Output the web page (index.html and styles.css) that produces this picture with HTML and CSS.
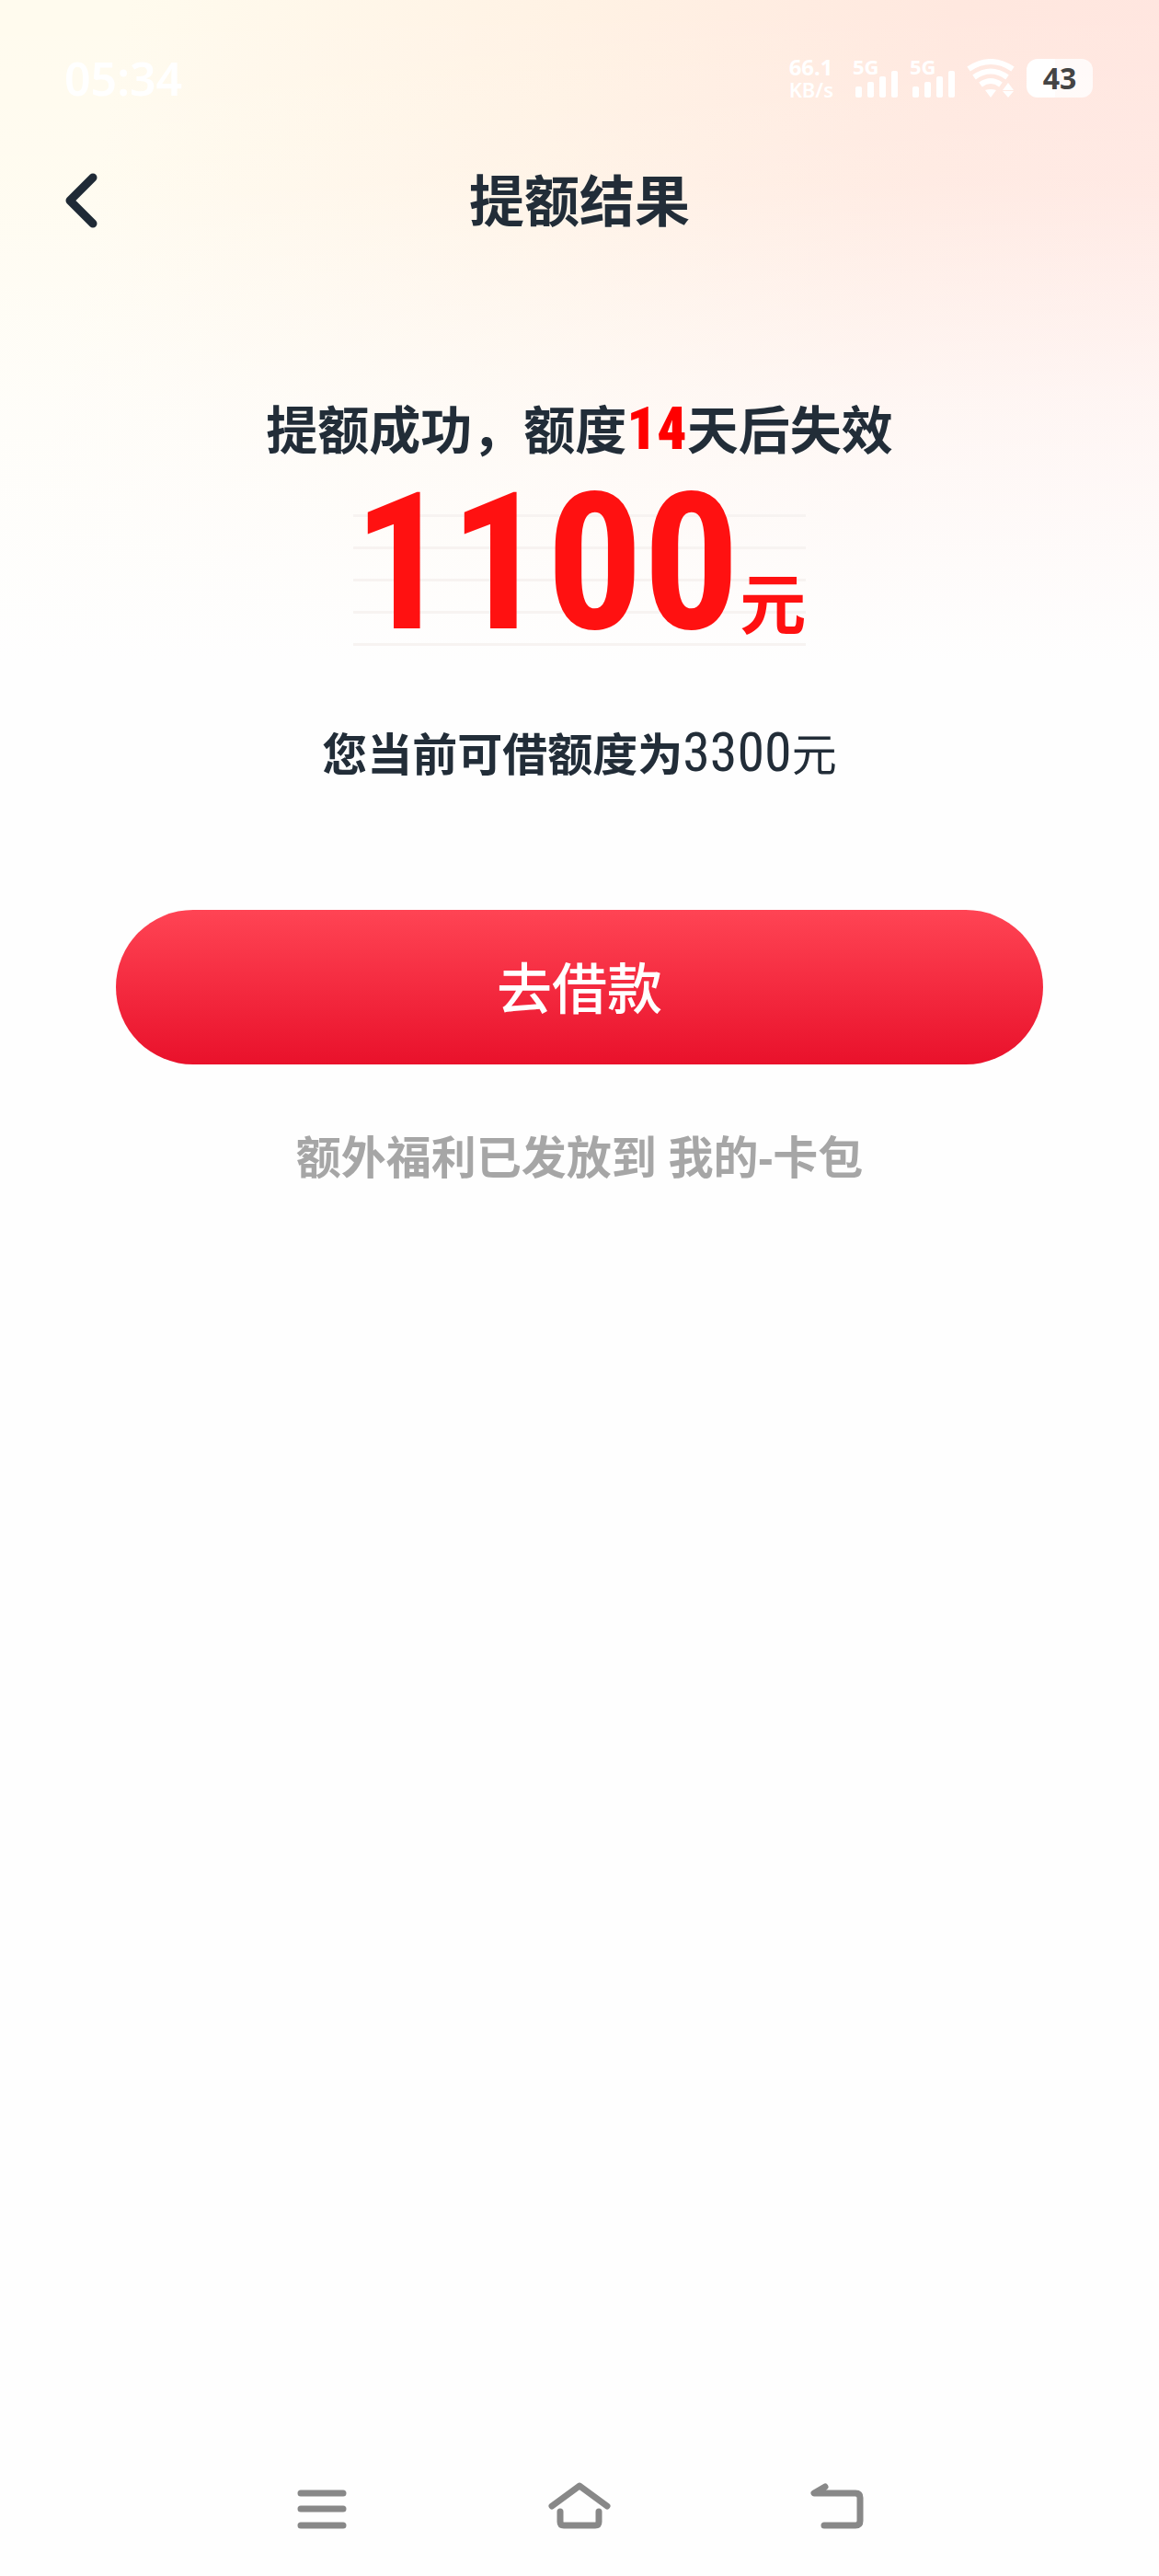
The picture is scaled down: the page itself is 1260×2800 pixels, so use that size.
FILE: index.html
```
<!DOCTYPE html>
<html lang="zh-CN">
<head>
  <meta charset="UTF-8">
  <meta name="viewport" content="width=device-width, initial-scale=1.0">
  <title>提额结果</title>
  <link rel="stylesheet" href="styles.css">
</head>
<body>
  <div class="page">
    <!-- 状态栏 -->
    <div class="status">
      <span class="time">05:34</span>
      <div class="status_right">
        <div class="net"><span>66.1</span><span class="unit">KB/s</span></div>
        <div class="signal">
          <span>5G</span>
          <svg width="49" height="30" viewBox="0 0 49 30" fill="#fff">
            <rect x="3" y="18" width="7" height="12" rx="2"/>
            <rect x="16" y="13" width="7" height="17" rx="2"/>
            <rect x="29" y="7" width="7" height="23" rx="2"/>
            <rect x="42" y="1" width="7" height="29" rx="2"/>
          </svg>
        </div>
        <div class="signal">
          <span>5G</span>
          <svg width="49" height="30" viewBox="0 0 49 30" fill="#fff">
            <rect x="3" y="18" width="7" height="12" rx="2"/>
            <rect x="16" y="13" width="7" height="17" rx="2"/>
            <rect x="29" y="7" width="7" height="23" rx="2"/>
            <rect x="42" y="1" width="7" height="29" rx="2"/>
          </svg>
        </div>
        <svg class="wifi" width="52" height="42" viewBox="0 0 52 42">
          <g fill="none" stroke="#fff" stroke-width="6">
            <path d="M2 11Q26-5 50 11"/>
            <path d="M8 20Q26 7 44 20"/>
            <path d="M15 28Q26 20 37 28"/>
          </g>
          <path d="M20 34q6-2 12 0l-6 8zM39 34l6-8 6 8zM39 35h12l-6 7z" fill="#fff"/>
        </svg>
        <div class="battery">43</div>
      </div>
    </div>

    <!-- 标题栏 -->
    <header class="header">
      <button class="back" aria-label="返回">
        <svg width="36" height="60" viewBox="0 0 36 60">
          <path d="M31 5L6 30l25 25" fill="none" stroke="#1f2a36" stroke-width="9" stroke-linecap="round" stroke-linejoin="round"/>
        </svg>
      </button>
      <h1>提额结果</h1>
    </header>

    <!-- 提额结果内容 -->
    <main class="result">
      <p class="tip">提额成功，额度<b>14</b>天后失效</p>
      <div class="amount"><span class="num">1100</span><span class="yuan">元</span></div>
      <p class="total"><b>您当前可借额度为</b><span>3300</span>元</p>
      <button class="borrow">去借款</button>
      <p class="gift">额外福利已发放到 我的-卡包</p>
    </main>

    <!-- 系统导航 -->
    <nav class="nav">
      <button aria-label="菜单">
        <svg width="70" height="56" viewBox="0 0 70 56">
          <path d="M12 14h46M12 31h46M12 49h46"/>
        </svg>
      </button>
      <button aria-label="主页">
        <svg width="70" height="56" viewBox="0 0 70 56">
          <path d="M5 28L35 6l30 22M14 34v11q0 4 4 4h34q4 0 4-4V34"/>
        </svg>
      </button>
      <button aria-label="后退">
        <svg width="70" height="56" viewBox="0 0 70 56">
          <path d="M22 7L10 14h45q5 0 5 5v25q0 5-5 5H21"/>
        </svg>
      </button>
    </nav>
  </div>
</body>
</html>
```
FILE: styles.css
```
*{
  margin: 0;
  padding: 0;
  box-sizing: border-box;
}
body{
  background-color: #fefefe;
  color: #222d38;
  font-family: "Noto Sans", "Noto Sans CJK SC", sans-serif;
}
button{
  border: 0;
  background: none;
  font-family: inherit;
  cursor: pointer;
}
svg{
  display: block;
}
/* 顶部暖色渐变背景 */
.page{
  display: flex;
  flex-direction: column;
  min-height: 100vh;
  background:
    linear-gradient(to bottom, rgba(254, 254, 254, 0), rgba(254, 254, 254, .15) 200px, rgba(254, 254, 254, .65) 440px, #fefefe 720px),
    linear-gradient(100deg, #fffbee 10%, #fff2e4 45%, #ffe8df 75%, #ffe5e0 100%) top / 100% 720px no-repeat;
}

/* 状态栏 */
.status{
  display: flex;
  justify-content: space-between;
  align-items: center;
  height: 170px;
  padding: 0 72px 0 70px;
  color: #fff;
  font-weight: 700;
}
.time{
  font-size: 50px;
  font-weight: 600;
}
.status_right{
  display: flex;
  align-items: center;
  gap: 13px;
}
.net{
  display: flex;
  flex-direction: column;
  margin-right: 8px;
  font-size: 24px;
  line-height: 24px;
}
.net .unit{
  font-size: 22px;
  font-weight: 600;
}
.signal{
  display: flex;
  flex-direction: column;
}
.signal span{
  height: 12px;
  font-size: 22px;
  line-height: 16px;
}
.battery{
  width: 72px;
  height: 42px;
  border-radius: 12px;
  background: linear-gradient(to right, #fff 43%, rgba(255, 255, 255, .8) 43%);
  color: #444;
  font-size: 32px;
  line-height: 42px;
  text-align: center;
}

/* 标题栏 */
.header{
  display: grid;
  grid-template-columns: 1fr auto 1fr;
  align-items: center;
  height: 96px;
  padding: 0 70px;
}
.back{
  justify-self: start;
}
.header h1{
  font-size: 60px;
  font-weight: 700;
  line-height: 96px;
}

/* 内容区 */
.result{
  display: flex;
  flex-direction: column;
  align-items: center;
  padding-top: 156px;
  text-align: center;
}
.tip{
  font-size: 56px;
  font-weight: 700;
  line-height: 88px;
}
.tip b{
  color: #f00;
  font-family: "Roboto Condensed", "Roboto", sans-serif;
  font-size: 64px;
  line-height: 56px;
}
.amount{
  display: flex;
  align-items: baseline;
  height: 192px;
  background: repeating-linear-gradient(to top, #f7f3f1 0, #f7f3f1 3px, transparent 3px, transparent 35px) bottom / 100% 144px no-repeat;
  color: #f11;
  font-weight: 700;
}
.amount .num{
  font-family: "Roboto Condensed", "Roboto", sans-serif;
  font-size: 208px;
  line-height: 204px;
}
.amount .yuan{
  font-size: 72px;
  line-height: 72px;
}
.total{
  margin-top: 76px;
  font-size: 49px;
  line-height: 80px;
}
.total span{
  font-family: "Roboto Condensed", "Roboto", sans-serif;
  font-size: 60px;
}
.borrow{
  width: 80%;
  height: 168px;
  margin-top: 130px;
  padding-bottom: 4px;
  border-radius: 84px;
  background: linear-gradient(to bottom, #ff4454, #e9112b);
  color: #fff;
  font-size: 60px;
  font-weight: 500;
}
.gift{
  margin-top: 60px;
  color: #a6a6a6;
  font-size: 49px;
  font-weight: 700;
  line-height: 80px;
}

/* 底部导航 */
.nav{
  display: flex;
  justify-content: center;
  gap: 210px;
  margin-top: auto;
  padding-bottom: 48px;
}
.nav path{
  fill: none;
  stroke: #888;
  stroke-width: 7;
  stroke-linecap: round;
  stroke-linejoin: round;
}
```
